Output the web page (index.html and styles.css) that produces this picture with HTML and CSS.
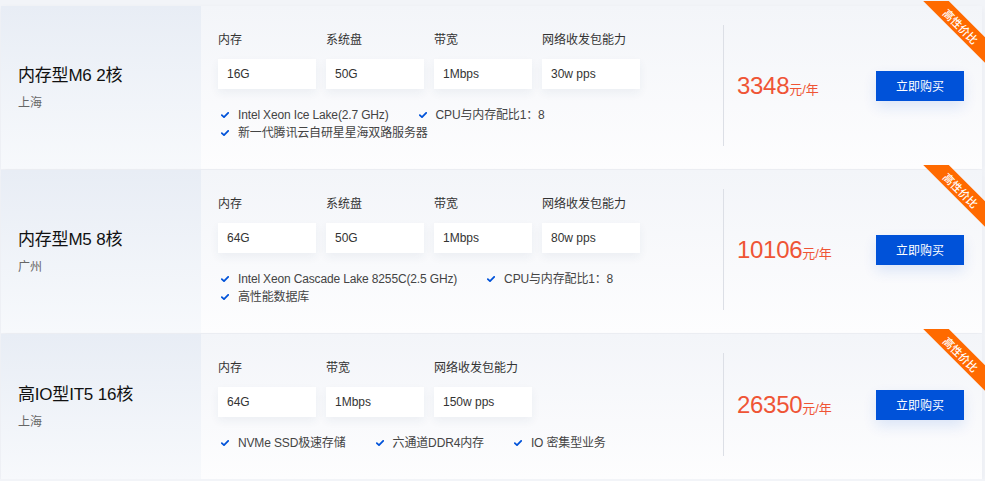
FILE: index.html
```html
<!DOCTYPE html>
<html lang="zh-CN">
<head>
<meta charset="utf-8">
<title>实例列表</title>
<link rel="stylesheet" href="styles.css">
</head>
<body>
<div class="list">
  <div class="card">
    <div class="card-name">
      <h3 class="name-title">内存型M6 2核</h3>
      <p class="name-region">上海</p>
    </div>
    <div class="card-spec">
      <div class="spec-grid">
        <div class="spec"><div class="spec-label">内存</div><div class="spec-value">16G</div></div>
        <div class="spec"><div class="spec-label">系统盘</div><div class="spec-value">50G</div></div>
        <div class="spec"><div class="spec-label">带宽</div><div class="spec-value">1Mbps</div></div>
        <div class="spec"><div class="spec-label">网络收发包能力</div><div class="spec-value">30w pps</div></div>
      </div>
      <ul class="features">
        <li class="feature"><svg class="check" viewBox="0 0 8 6"><path d="M0.8 3.1 L3 5.1 L7.2 0.9"/></svg>Intel Xeon Ice Lake(2.7 GHz)</li>
        <li class="feature"><svg class="check" viewBox="0 0 8 6"><path d="M0.8 3.1 L3 5.1 L7.2 0.9"/></svg>CPU与内存配比1：8</li>
        <li class="feature"><svg class="check" viewBox="0 0 8 6"><path d="M0.8 3.1 L3 5.1 L7.2 0.9"/></svg>新一代腾讯云自研星星海双路服务器</li>
      </ul>
    </div>
    <div class="card-price">
      <div class="price"><span class="price-num">3348</span><span class="price-unit">元/年</span></div>
      <button class="buy">立即购买</button>
    </div>
    <div class="ribbon-wrap"><div class="ribbon">高性价比</div></div>
  </div>

  <div class="card">
    <div class="card-name">
      <h3 class="name-title">内存型M5 8核</h3>
      <p class="name-region">广州</p>
    </div>
    <div class="card-spec">
      <div class="spec-grid">
        <div class="spec"><div class="spec-label">内存</div><div class="spec-value">64G</div></div>
        <div class="spec"><div class="spec-label">系统盘</div><div class="spec-value">50G</div></div>
        <div class="spec"><div class="spec-label">带宽</div><div class="spec-value">1Mbps</div></div>
        <div class="spec"><div class="spec-label">网络收发包能力</div><div class="spec-value">80w pps</div></div>
      </div>
      <ul class="features">
        <li class="feature"><svg class="check" viewBox="0 0 8 6"><path d="M0.8 3.1 L3 5.1 L7.2 0.9"/></svg>Intel Xeon Cascade Lake 8255C(2.5 GHz)</li>
        <li class="feature"><svg class="check" viewBox="0 0 8 6"><path d="M0.8 3.1 L3 5.1 L7.2 0.9"/></svg>CPU与内存配比1：8</li>
        <li class="feature"><svg class="check" viewBox="0 0 8 6"><path d="M0.8 3.1 L3 5.1 L7.2 0.9"/></svg>高性能数据库</li>
      </ul>
    </div>
    <div class="card-price">
      <div class="price"><span class="price-num">10106</span><span class="price-unit">元/年</span></div>
      <button class="buy">立即购买</button>
    </div>
    <div class="ribbon-wrap"><div class="ribbon">高性价比</div></div>
  </div>

  <div class="card">
    <div class="card-name">
      <h3 class="name-title">高IO型IT5 16核</h3>
      <p class="name-region">上海</p>
    </div>
    <div class="card-spec">
      <div class="spec-grid">
        <div class="spec"><div class="spec-label">内存</div><div class="spec-value">64G</div></div>
        <div class="spec"><div class="spec-label">带宽</div><div class="spec-value">1Mbps</div></div>
        <div class="spec"><div class="spec-label">网络收发包能力</div><div class="spec-value">150w pps</div></div>
      </div>
      <ul class="features">
        <li class="feature"><svg class="check" viewBox="0 0 8 6"><path d="M0.8 3.1 L3 5.1 L7.2 0.9"/></svg>NVMe SSD极速存储</li>
        <li class="feature"><svg class="check" viewBox="0 0 8 6"><path d="M0.8 3.1 L3 5.1 L7.2 0.9"/></svg>六通道DDR4内存</li>
        <li class="feature"><svg class="check" viewBox="0 0 8 6"><path d="M0.8 3.1 L3 5.1 L7.2 0.9"/></svg>IO 密集型业务</li>
      </ul>
    </div>
    <div class="card-price">
      <div class="price"><span class="price-num">26350</span><span class="price-unit">元/年</span></div>
      <button class="buy">立即购买</button>
    </div>
    <div class="ribbon-wrap"><div class="ribbon">高性价比</div></div>
  </div>
</div>
</body>
</html>
```

FILE: styles.css
```css
* { box-sizing: border-box; }
html, body {
  margin: 0;
  padding: 0;
  background: #f2f4f8;
  overflow: hidden;
}
body {
  font-family: "Liberation Sans", "Noto Sans CJK SC", sans-serif;
  color: #333;
  font-size: 12px;
}
.list {
  display: flex;
  flex-direction: column;
  gap: 1px;
  padding: 6px 3px 0 1px;
}
.card {
  position: relative;
  display: flex;
  background: linear-gradient(180deg, #f3f5f9 0%, #fdfdfe 100%);
  box-shadow: 0 2px 6px rgba(40, 60, 100, 0.04);
}
.card-name {
  width: 200px;
  flex: none;
  display: flex;
  flex-direction: column;
  justify-content: center;
  padding-left: 17px;
  background: linear-gradient(180deg, #e8edf5 0%, #f7f9fc 100%);
}
.name-title {
  margin: 0;
  font-size: 17px;
  font-weight: normal;
  line-height: 24px;
  color: #111;
  letter-spacing: -0.2px;
}
.name-region {
  margin: 6px 0 0;
  font-size: 12px;
  line-height: 18px;
  color: #666;
}
.card-spec {
  flex: 1;
  padding: 25px 20px 27px 17px;
}
.spec-grid {
  display: grid;
  grid-template-columns: repeat(4, 98px);
  column-gap: 10px;
}
.spec-label {
  font-size: 12px;
  line-height: 18px;
  color: #333;
  margin-bottom: 10px;
}
.spec-value {
  height: 30px;
  line-height: 30px;
  padding-left: 9px;
  background: #fff;
  font-size: 12px;
  color: #333;
  box-shadow: 0 4px 10px rgba(40, 60, 110, 0.06);
}
.features {
  list-style: none;
  margin: 17px 0 0;
  padding: 0 0 0 3px;
  display: flex;
  flex-wrap: wrap;
  column-gap: 30px;
}
.feature {
  display: flex;
  align-items: center;
  line-height: 18px;
  font-size: 12px;
  color: #444;
  letter-spacing: -0.15px;
}
.check {
  width: 8px;
  height: 6px;
  margin-right: 9px;
  flex: none;
}
.check path {
  fill: none;
  stroke: #0052d9;
  stroke-width: 1.8;
  stroke-linecap: round;
  stroke-linejoin: round;
}
.card-price {
  width: 259px;
  flex: none;
  display: flex;
  align-items: center;
  justify-content: space-between;
  margin: 19px 0 23px;
  padding: 0 18px 0 13px;
  border-left: 1px solid #dcdfe6;
}
.price {
  color: #ef5435;
  white-space: nowrap;
}
.price-num {
  font-size: 24px;
  line-height: 30px;
  letter-spacing: -0.3px;
}
.price-unit {
  font-size: 13px;
}
.buy {
  width: 88px;
  height: 30px;
  border: 0;
  background: #0052d9;
  color: #fff;
  font-family: "Noto Sans CJK SC", "Liberation Sans", sans-serif;
  font-size: 12px;
  cursor: pointer;
  box-shadow: 0 6px 14px rgba(0, 82, 217, 0.12);
}
.ribbon-wrap {
  position: absolute;
  top: -5px;
  right: -3px;
  width: 64px;
  height: 64px;
  overflow: hidden;
  pointer-events: none;
}
.ribbon {
  position: absolute;
  left: -10px;
  top: 16px;
  width: 100px;
  height: 18px;
  line-height: 18px;
  text-align: center;
  background: #ff6a00;
  color: #fff;
  font-family: "Noto Sans CJK SC", sans-serif;
  font-size: 11px;
  font-weight: 500;
  transform: rotate(45deg);
}
```
